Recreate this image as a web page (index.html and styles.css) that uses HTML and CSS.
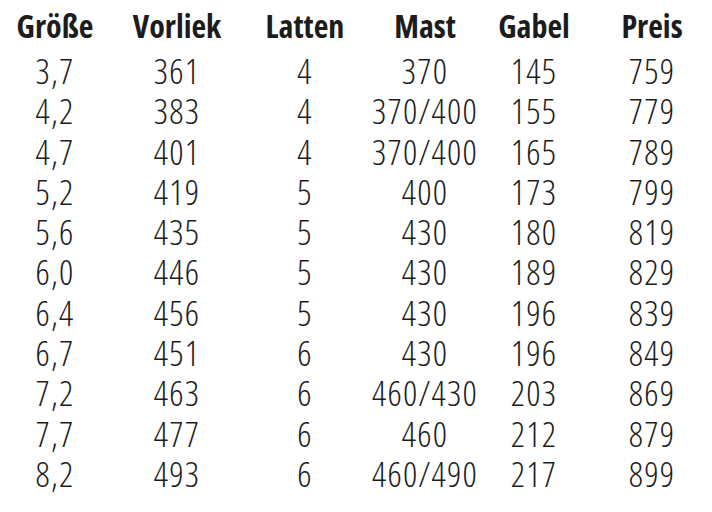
FILE: index.html
```html
<!DOCTYPE html>
<html lang="de">
<head>
<meta charset="utf-8">
<link rel="stylesheet" href="styles.css">
</head>
<body>
<table class="sizes">
  <colgroup>
    <col class="c1"><col class="c2"><col class="c3"><col class="c4"><col class="c5"><col class="c6">
  </colgroup>
  <thead>
    <tr><th>Größe</th><th>Vorliek</th><th>Latten</th><th>Mast</th><th>Gabel</th><th class="last">Preis</th></tr>
  </thead>
  <tbody>
    <tr><td>3,7</td><td>361</td><td>4</td><td>370</td><td>145</td><td class="last">759</td></tr>
    <tr><td>4,2</td><td>383</td><td>4</td><td>370/400</td><td>155</td><td class="last">779</td></tr>
    <tr><td>4,7</td><td>401</td><td>4</td><td>370/400</td><td>165</td><td class="last">789</td></tr>
    <tr><td>5,2</td><td>419</td><td>5</td><td>400</td><td>173</td><td class="last">799</td></tr>
    <tr><td>5,6</td><td>435</td><td>5</td><td>430</td><td>180</td><td class="last">819</td></tr>
    <tr><td>6,0</td><td>446</td><td>5</td><td>430</td><td>189</td><td class="last">829</td></tr>
    <tr><td>6,4</td><td>456</td><td>5</td><td>430</td><td>196</td><td class="last">839</td></tr>
    <tr><td>6,7</td><td>451</td><td>6</td><td>430</td><td>196</td><td class="last">849</td></tr>
    <tr><td>7,2</td><td>463</td><td>6</td><td>460/430</td><td>203</td><td class="last">869</td></tr>
    <tr><td>7,7</td><td>477</td><td>6</td><td>460</td><td>212</td><td class="last">879</td></tr>
    <tr><td>8,2</td><td>493</td><td>6</td><td>460/490</td><td>217</td><td class="last">899</td></tr>
  </tbody>
</table>
</body>
</html>
```
FILE: styles.css
```css
html, body {
  margin: 0;
  padding: 0;
  background: #ffffff;
}
body {
  font-family: "Open Sans", "DejaVu Sans", sans-serif;
  color: #1c1c1c;
}
.sizes {
  border-collapse: collapse;
  table-layout: fixed;
  width: 712px;
}
.c1 { width: 110px; }
.c2 { width: 134px; }
.c3 { width: 122px; }
.c4 { width: 118px; }
.c5 { width: 100px; }
.c6 { width: 128px; }
.sizes th,
.sizes td {
  padding: 0;
  text-align: center;
  white-space: nowrap;
}
.sizes th.last,
.sizes td.last {
  padding-left: 8px;
}
.sizes th {
  font-size: 32px;
  font-weight: 700;
  font-stretch: 75%;
  line-height: 51px;
  height: 51px;
}
.sizes td {
  font-size: 35px;
  font-weight: 300;
  font-stretch: 75%;
  letter-spacing: 1.2px;
  line-height: 40.3px;
  height: 40.3px;
}
```
